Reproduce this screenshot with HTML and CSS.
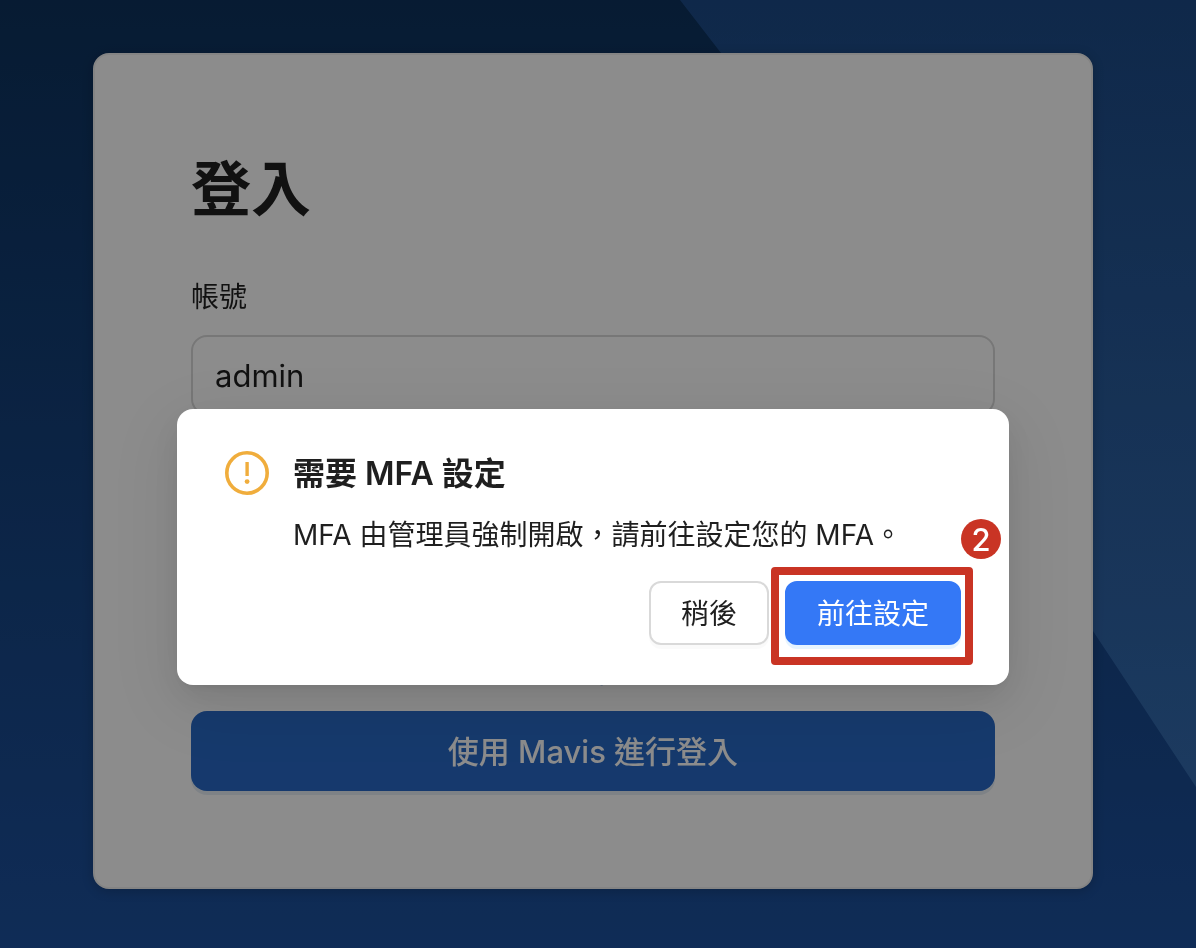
FILE: index.html
```html
<!DOCTYPE html>
<html lang="zh-Hant">
<head>
    <meta charset="UTF-8">
    <meta name="viewport" content="width=device-width, initial-scale=1.0">
    <title>登入</title>
    <link rel="stylesheet" href="styles.css">
</head>
<body>
    <!-- Slanted light band behind the card -->
    <svg class="backdrop" viewBox="0 0 1196 948" preserveAspectRatio="none" aria-hidden="true">
        <defs>
            <linearGradient id="band" x1="0" y1="0" x2="0" y2="1">
                <stop offset="0" stop-color="#4283e8"/>
                <stop offset="1" stop-color="#70b4f0"/>
            </linearGradient>
        </defs>
        <path d="M680 0 L721 53 Q900 315 1093 631 L1196 787 V0 Z" fill="url(#band)" fill-opacity="0.3"/>
    </svg>

    <main class="page">
        <form class="login-card">
            <h1>登入</h1>

            <div class="field">
                <label for="account">帳號</label>
                <input type="text" id="account" value="admin">
            </div>

            <div class="field">
                <label for="password">密碼</label>
                <input type="password" id="password">
            </div>

            <a class="forgot" href="#">忘記密碼？</a>
            <button type="button" class="login-button">使用 Mavis 進行登入</button>
        </form>
    </main>

    <!-- MFA dialog -->
    <div class="mask">
        <div class="modal" role="dialog" aria-modal="true" aria-labelledby="modalTitle">
            <svg class="warning-icon" viewBox="0 0 44 44" aria-hidden="true">
                <circle cx="22" cy="22" r="20.2" fill="none" stroke="#f0ad3c" stroke-width="3.6"/>
                <path d="M20.4 11.5 q0 -.5 .5 -.5 h2.4 q.5 0 .5 .5 v13 q0 .5 -.5 .5 h-2.4 q-.5 0 -.5 -.5 Z" fill="#f0ad3c"/>
                <circle cx="22.1" cy="30.6" r="2.4" fill="#f0ad3c"/>
            </svg>
            <div class="modal-content">
                <h2 id="modalTitle">需要 MFA 設定</h2>
                <p>MFA 由管理員強制開啟，請前往設定您的 MFA。</p>
            </div>
            <div class="modal-buttons">
                <button type="button" class="later">稍後</button>
                <div class="step">
                    <button type="button" class="setup">前往設定</button>
                    <span class="step-number">2</span>
                </div>
            </div>
        </div>
    </div>
</body>
</html>
```

FILE: styles.css
```css
* {
    box-sizing: border-box;
}

body {
    margin: 0;
    min-height: 100vh;
    font-family: Inter, "Noto Sans CJK TC", sans-serif;
    font-size: 28px;
    line-height: 44px;
    color: #1f1f1f;
    background: linear-gradient(180deg, #0d325d, #1d519e);
}

button,
input {
    font-family: inherit;
    color: inherit;
}

/* Full window background drawing */
.backdrop {
    position: fixed;
    inset: 0;
    width: 100%;
    height: 100%;
}

.page {
    position: relative;
    padding: 53px 103px 59px 93px;
}

/* Login card */
.login-card {
    display: flex;
    flex-direction: column;
    padding: 96px;
    border: 2px solid #f0f0f0;
    border-radius: 16px;
    background: #fff;
    box-shadow: 0 2px 12px rgba(0, 0, 0, 0.2);
}

.login-card h1 {
    margin: 0 0 48px;
    font-size: 60px;
    line-height: 76px;
    font-weight: 700;
}

.field {
    display: flex;
    flex-direction: column;
    gap: 16px;
    margin-bottom: 48px;
}

.field input {
    width: 100%;
    height: 80px;
    padding: 0 22px;
    border: 2px solid #d9d9d9;
    border-radius: 16px;
    background: #fff;
    font-size: 31px;
}

.forgot {
    align-self: center;
    margin-bottom: 16px;
    color: #2869c6;
    text-decoration: none;
}

.login-button {
    height: 80px;
    padding: 0 30px 4px;
    border: none;
    border-radius: 16px;
    background: #2869c6;
    color: #fff;
    font-size: 31px;
    font-weight: 500;
    box-shadow: 0 4px 0 rgba(5, 75, 155, 0.1);
}

/* Dark mask over the page, keeps the dialog in the middle of the card */
.mask {
    position: fixed;
    inset: 0;
    display: flex;
    align-items: center;
    padding: 146px 187px 0 177px;
    background: rgba(0, 0, 0, 0.45);
}

.modal {
    flex: 1;
    display: grid;
    grid-template-columns: 44px 1fr;
    column-gap: 24px;
    padding: 40px 48px;
    border-radius: 16px;
    background: #fff;
    box-shadow: 0 12px 32px rgba(0, 0, 0, 0.08), 0 6px 12px -8px rgba(0, 0, 0, 0.12), 0 18px 72px 16px rgba(0, 0, 0, 0.07);
}

.warning-icon {
    width: 44px;
    height: 44px;
    margin-top: 2px;
}

.modal h2 {
    margin: 0 0 14px;
    font-size: 32px;
    line-height: 50px;
    font-weight: 600;
}

.modal p {
    margin: 0;
}

.modal-buttons {
    grid-column: 1 / -1;
    display: flex;
    justify-content: flex-end;
    gap: 16px;
    margin-top: 24px;
}

.modal-buttons button {
    height: 64px;
    padding: 0 30px 2px;
    border: 2px solid #d9d9d9;
    border-radius: 12px;
    background: #fff;
    font-size: 28px;
    box-shadow: 0 4px 0 rgba(0, 0, 0, 0.02);
}

.modal-buttons .setup {
    border-color: #3478f6;
    background: #3478f6;
    color: #fff;
    box-shadow: 0 4px 0 rgba(5, 145, 255, 0.1);
}

/* Red frame and number that mark the step */
.step {
    position: relative;
}

.step::after {
    content: "";
    position: absolute;
    inset: -14px -12px -20px -14px;
    border: 8px solid #c93424;
    border-radius: 4px;
    pointer-events: none;
}

.step-number {
    position: absolute;
    top: -62px;
    right: -40px;
    width: 40px;
    height: 40px;
    border-radius: 50%;
    background: #c93424;
    color: #fff;
    font-size: 31px;
    line-height: 42px;
    font-weight: 500;
    text-align: center;
}
```
